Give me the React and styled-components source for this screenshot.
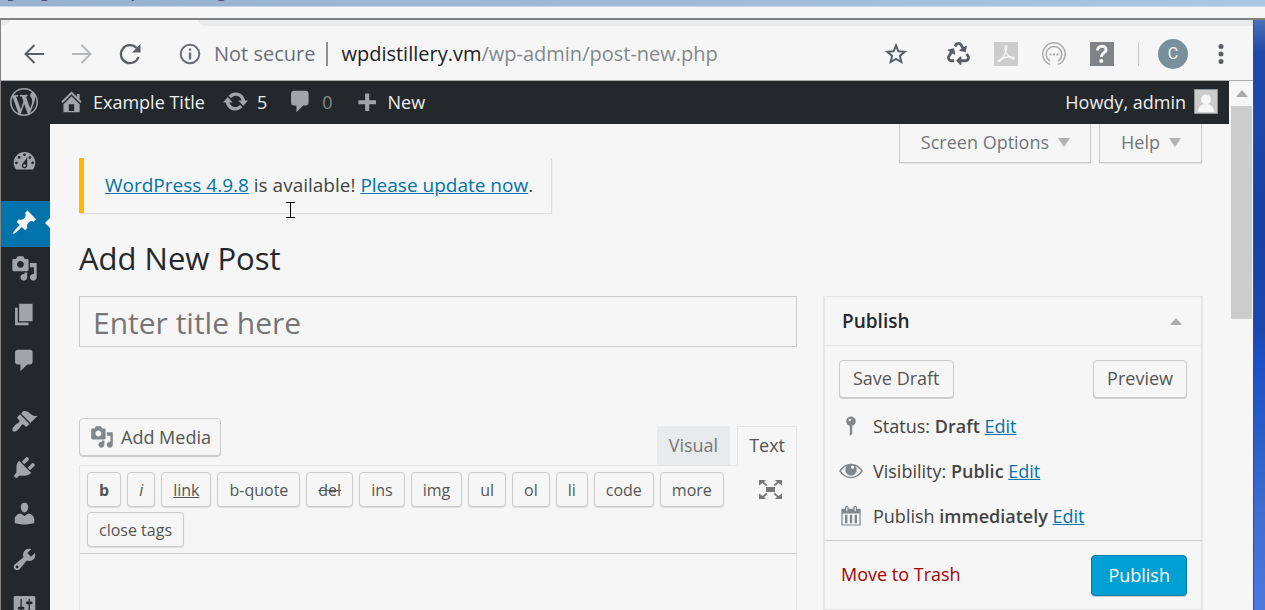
import React, { useState } from 'react';
import styled, { createGlobalStyle, css } from 'styled-components';
import { FaRecycle } from 'react-icons/fa';

const Global = createGlobalStyle`
  *, *::before, *::after { box-sizing: border-box; }
  html, body { margin: 0; height: 100%; overflow: hidden; }
  #root { height: 100%; }
  body { font-family: "Open Sans", "Noto Sans", sans-serif; font-size: 18px; line-height: 26px; color: #444; background: #f6f6f6; }
  button, input { font: inherit; color: inherit; margin: 0; }
  button { cursor: pointer; }
  svg { display: block; flex: none; }
  a { color: #0073aa; }
`;

const icons = {
  wordpress: 'M20 10c0-5.51-4.49-10-10-10C4.48 0 0 4.49 0 10c0 5.52 4.48 10 10 10 5.51 0 10-4.48 10-10zM7.78 15.37L4.37 6.22c.55-.02 1.17-.08 1.17-.08.5-.06.44-1.13-.06-1.11 0 0-1.45.11-2.37.11-.18 0-.37 0-.58-.01C4.12 2.69 6.87 1.11 10 1.11c2.33 0 4.45.87 6.05 2.34-.68-.11-1.65.39-1.65 1.58 0 .74.45 1.36.9 2.1.35.61.55 1.36.55 2.46 0 1.49-1.4 5-1.4 5l-3.03-8.37c.54-.02.82-.17.82-.17.5-.05.44-1.25-.06-1.22 0 0-1.44.12-2.38.12-.87 0-2.33-.12-2.33-.12-.5-.03-.56 1.2-.06 1.22l.92.08 1.26 3.41zM17.41 10c.24-.64.74-1.87.43-4.25.7 1.29 1.05 2.71 1.05 4.25 0 3.29-1.73 6.24-4.4 7.78.97-2.59 1.94-5.2 2.92-7.78zM6.1 18.09C3.12 16.65 1.11 13.53 1.11 10c0-1.3.23-2.48.72-3.59C3.25 10.3 4.67 14.2 6.1 18.09zm4.03-6.63l2.58 6.98c-.86.29-1.76.45-2.71.45-.79 0-1.57-.11-2.29-.33.81-2.38 1.62-4.74 2.42-7.1z',
  home: 'M16 8.5l1.53 1.53-1.06 1.06L10 4.6l-6.47 6.49-1.06-1.06L10 2.5l4 4v-2h2v4zm-6-2.46l6 5.99V18H4v-5.97zM12 17v-5H8v5h4z',
  update: 'M10.2 3.28c3.53 0 6.43 2.61 6.92 6h2.08l-3.5 4-3.5-4h2.32c-.45-1.97-2.21-3.45-4.32-3.45-1.45 0-2.73.71-3.54 1.78L4.95 5.66C6.23 4.2 8.11 3.28 10.2 3.28zm-.4 13.44c-3.52 0-6.43-2.61-6.92-6H.8l3.5-4c1.17 1.33 2.33 2.67 3.5 4H5.48c.45 1.97 2.21 3.45 4.32 3.45 1.45 0 2.73-.71 3.54-1.78l1.71 1.95c-1.28 1.46-3.15 2.38-5.25 2.38z',
  comments: 'M5 2h9c1.1 0 2 .9 2 2v7c0 1.1-.9 2-2 2h-2l-5 5v-5H5c-1.1 0-2-.9-2-2V4c0-1.1.9-2 2-2z',
  plus: 'M17 9v3h-5v5H9v-5H4V9h5V4h3v5h5z',
  dashboard: 'M3.76 16h12.48c1.1-1.37 1.76-3.11 1.76-5 0-4.42-3.58-8-8-8s-8 3.58-8 8c0 1.89.66 3.63 1.76 5zM10 4c.55 0 1 .45 1 1s-.45 1-1 1-1-.45-1-1 .45-1 1-1zM6 6c.55 0 1 .45 1 1s-.45 1-1 1-1-.45-1-1 .45-1 1-1zm8 0c.55 0 1 .45 1 1s-.45 1-1 1-1-.45-1-1 .45-1 1-1zm-5.37 5.55L12 7v6c0 1.1-.9 2-2 2s-2-.9-2-2c0-.57.24-1.08.63-1.45zM4 10c.55 0 1 .45 1 1s-.45 1-1 1-1-.45-1-1 .45-1 1-1zm12 0c.55 0 1 .45 1 1s-.45 1-1 1-1-.45-1-1 .45-1 1-1zm-5 3c0-.55-.45-1-1-1s-1 .45-1 1 .45 1 1 1 1-.45 1-1z',
  post: 'M10.44 3.02l1.82-1.82 6.36 6.35-1.83 1.82c-1.05-.68-2.48-.57-3.41.36l-.75.75c-.92.93-1.04 2.35-.35 3.41l-1.83 1.82-2.41-2.41-2.8 2.79c-.42.42-3.38 2.71-3.8 2.29s1.86-3.39 2.28-3.81l2.79-2.79L4.1 9.36l1.83-1.82c1.05.69 2.48.57 3.4-.36l.75-.75c.93-.92 1.05-2.35.36-3.41z',
  media: 'M13 11V4c0-.55-.45-1-1-1h-1.67L9 1H5L3.67 3H2c-.55 0-1 .45-1 1v7c0 .55.45 1 1 1h10c.55 0 1-.45 1-1zM7 4.5c1.38 0 2.5 1.12 2.5 2.5S8.38 9.5 7 9.5 4.5 8.38 4.5 7 5.62 4.5 7 4.5zM14 6h5v10.5c0 1.38-1.12 2.5-2.5 2.5S14 17.88 14 16.5s1.12-2.5 2.5-2.5c.17 0 .34.02.5.05V9h-3V6zm-4 8.05V13h2v3.5c0 1.38-1.12 2.5-2.5 2.5S7 17.88 7 16.5 8.12 14 9.5 14c.17 0 .34.02.5.05z',
  page: 'M6 15V2h10v13H6zm-1 1h8v2H3V5h2v11z',
  appearance: 'M14.48 11.06L7.41 3.99l1.5-1.5c.5-.56 2.3-.47 3.51.32 1.21.8 1.43 1.28 2.91 2.1 1.18.64 2.45 1.26 4.45.85zm-.71.71L6.7 4.7 4.93 6.47c-.39.39-.39 1.02 0 1.41l1.06 1.06c.39.39.39 1.03 0 1.42-.6.6-1.43 1.11-2.21 1.69-.35.26-.7.53-1.01.84C1.43 14.23.4 16.08 1.4 17.07c.99 1 2.84-.03 4.18-1.36.31-.31.58-.66.85-1.02.57-.78 1.08-1.61 1.69-2.21.39-.39 1.02-.39 1.41 0l1.06 1.06c.39.39 1.02.39 1.41 0z',
  plugins: 'M13.11 4.36L9.87 7.6 8 5.73l3.24-3.24c.35-.34 1.05-.2 1.56.32.52.51.66 1.21.31 1.55zm-8 1.77l.91-1.12 9.01 9.01-1.19.84c-.71.71-2.63 1.16-3.82 1.16H6.14L4.9 17.26c-.59.59-1.54.59-2.12 0-.59-.58-.59-1.53 0-2.12l1.24-1.24v-3.88c0-1.13.4-3.19 1.09-3.89zm7.26 3.97l3.24-3.24c.34-.35 1.04-.21 1.55.31.52.51.66 1.21.31 1.55l-3.24 3.25z',
  users: 'M10 9.25c-2.27 0-2.73-3.44-2.73-3.44C7 4.02 7.82 2 9.97 2c2.16 0 2.98 2.02 2.71 3.81 0 0-.41 3.44-2.68 3.44zm0 2.57L12.72 10c2.39 0 4.52 2.33 4.52 4.53v2.49s-3.65 1.13-7.24 1.13c-3.65 0-7.24-1.13-7.24-1.13v-2.49c0-2.25 1.94-4.48 4.47-4.48z',
  tools: 'M16.68 9.77c-1.34 1.34-3.3 1.67-4.95.99l-5.41 6.52c-.99.99-2.59.99-3.58 0s-.99-2.59 0-3.57l6.52-5.42c-.68-1.65-.35-3.61.99-4.95 1.28-1.28 3.12-1.62 4.72-1.06l-2.89 2.89 2.82 2.82 2.86-2.87c.53 1.58.18 3.39-1.08 4.65zM3.81 16.21c.4.39 1.04.39 1.43 0 .4-.4.4-1.04 0-1.43-.39-.4-1.03-.4-1.43 0-.39.39-.39 1.03 0 1.43z',
  settings: 'M18 16V4c0-.55-.45-1-1-1H3c-.55 0-1 .45-1 1v12c0 .55.45 1 1 1h14c.55 0 1-.45 1-1zM8 11h1c.55 0 1 .45 1 1s-.45 1-1 1H8v1.5c0 .28-.22.5-.5.5s-.5-.22-.5-.5V13H6c-.55 0-1-.45-1-1s.45-1 1-1h1V5.5c0-.28.22-.5.5-.5s.5.22.5.5V11zm5-2h-1c-.55 0-1-.45-1-1s.45-1 1-1h1V5.5c0-.28.22-.5.5-.5s.5.22.5.5V7h1c.55 0 1 .45 1 1s-.45 1-1 1h-1v5.5c0 .28-.22.5-.5.5s-.5-.22-.5-.5V9z',
  status: 'M14 6c0 1.86-1.28 3.41-3 3.86V16c0 1-2 2-2 2V9.86c-1.72-.45-3-2-3-3.86 0-2.21 1.79-4 4-4s4 1.79 4 4zM8 5c0 .55.45 1 1 1s1-.45 1-1-.45-1-1-1-1 .45-1 1z',
  visibility: 'M0 10Q4 4 10 4T20 10Q16 16 10 16T0 10zM1.6 10Q4.8 14.8 10 14.8T18.4 10Q16.6 7 13.6 5.8A4.8 4.8 0 1 1 6.4 5.8Q3.4 7 1.6 10zM10 6.8a1.3 1.3 0 1 0 2.6 0a1.3 1.3 0 1 0-2.6 0z',
  calendar: 'M15 4h3v14H2V4h3V3c0-.83.67-1.5 1.5-1.5S8 2.17 8 3v1h4V3c0-.83.67-1.5 1.5-1.5S15 2.17 15 3v1zM6 3v2.5c0 .28.22.5.5.5s.5-.22.5-.5V3c0-.28-.22-.5-.5-.5S6 2.72 6 3zm7 0v2.5c0 .28.22.5.5.5s.5-.22.5-.5V3c0-.28-.22-.5-.5-.5s-.5.22-.5.5zm4 14V8H3v9h14zM7 16V9H5v7h2zm4 0V9H9v7h2zm4 0V9h-2v7h2z',
};

const Icon = ({ name, size = 27 }) => (
  <svg width={size} height={size} viewBox="0 0 20 20" fill="currentColor" fillRule="evenodd" aria-hidden="true">
    <path d={icons[name]} />
  </svg>
);

const Screen = styled.div`
  height: 100%;
  display: flex;
  flex-direction: column;
`;
const BackWindow = styled.div`
  flex: none;
  height: 7px;
  border-bottom: 1px solid #c8d6e6;
  background: linear-gradient(90deg, #98b2d2, #a0b9d7 50%, #a9c8e5);
`;
const BackGap = styled.div`
  flex: none;
  height: 11px;
`;
const Desktop = styled.div`
  flex: 1;
  min-height: 0;
  display: flex;
  border-top: 2px solid #808080;
`;
const Wallpaper = styled.div`
  flex: none;
  width: 12px;
  border-left: 1px solid #2c4f98;
  background: linear-gradient(180deg, #4a72b8 0, #1e4aa8 32px, #1742a2 200px, #1a48ac 310px, #1c50c8 340px, #2a5cc8 410px, #4070d0 500px, #4a78e0 590px);
`;
const BrowserWindow = styled.div`
  flex: 1;
  min-width: 0;
  display: flex;
  flex-direction: column;
  border-left: 1px solid #848484;
`;
const TabStrip = styled.div`
  flex: none;
  height: 6px;
  display: flex;
  justify-content: space-between;
`;
const TabEdge = styled.div`
  width: 9px;
  background: #e8e9eb;
  border-bottom-right-radius: 9px 6px;
`;
const TabRest = styled.div`
  flex: 1;
  margin-left: 188px;
  background: #e8e9eb;
  border-bottom-left-radius: 9px 6px;
`;
const Toolbar = styled.div`
  flex: none;
  height: 55px;
  display: flex;
  align-items: center;
  padding: 1px 29px 0 21px;
  border-bottom: 1px solid #a8adab;
  color: #5a5f66;
`;
const NavButtons = styled.div`
  display: flex;
  gap: 24px;
  margin-right: 37px;
`;
const BareButton = styled.button`
  display: flex;
  align-items: center;
  justify-content: center;
  padding: 0;
  border: 0;
  background: none;
  color: ${(p) => p.$color || 'inherit'};
`;
const Address = styled.div`
  flex: 1;
  min-width: 0;
  display: flex;
  align-items: center;
  font-size: 20px;
  color: #6b7078;
`;
const Secure = styled.span`
  padding: 0 11px 0 13px;
`;
const Divider = styled.span`
  width: ${(p) => p.$width}px;
  height: 24px;
  background: ${(p) => p.$color};
`;
const Url = styled.span`
  margin-left: 13px;
  color: #84898c;
  b { font-weight: 400; color: #202124; }
`;
const Extensions = styled.div`
  display: flex;
  align-items: center;
  gap: 24px;
  margin: 0 24px 0 39px;
`;
const Profile = styled.button`
  width: 30px;
  height: 30px;
  margin: 0 30px 0 19px;
  padding: 0;
  border: 0;
  border-radius: 50%;
  background: #78909c;
  color: #f6f6f6;
  font: 16px/30px Roboto, sans-serif;
`;
const Viewport = styled.div`
  flex: 1;
  min-height: 0;
  display: flex;
`;
const Admin = styled.div`
  flex: 1;
  min-width: 0;
  display: flex;
  flex-direction: column;
`;
const ScrollTrack = styled.div`
  flex: none;
  width: 24px;
  display: flex;
  flex-direction: column;
  align-items: center;
  gap: 9px;
  padding: 9px 1px 0 2px;
`;
const ScrollThumb = styled.div`
  width: 100%;
  height: 213px;
  background: #ccc;
`;
const Triangle = styled.span`
  display: block;
  width: 0;
  height: 0;
  border: solid transparent;
  border-width: 0 6px;
  ${(p) => (p.$up
    ? css`border-bottom: 7px solid #aaacae;`
    : css`border-top: 9px solid #b0b3b5;`)}
`;
const AdminBar = styled.header`
  flex: none;
  height: 43px;
  display: flex;
  align-items: center;
  padding: 0 11px 2px 9px;
  background: #23282d;
  color: #eee;
`;
const BarLink = styled.a`
  display: flex;
  align-items: center;
  gap: 8px;
  margin-right: ${(p) => p.$after || 0}px;
  color: inherit;
  text-decoration: none;
  svg { color: #a0a5aa; }
  span { color: ${(p) => (p.$dim ? '#82878c' : 'inherit')}; }
`;
const Account = styled(BarLink)`
  margin-left: auto;
`;
const Body = styled.div`
  flex: 1;
  min-height: 0;
  display: flex;
`;
const SideMenu = styled.nav`
  flex: none;
  width: 49px;
  padding-top: 16px;
  overflow: hidden;
  background: #23282d;
`;
const SideLink = styled.a`
  position: relative;
  display: flex;
  align-items: center;
  justify-content: center;
  height: 46px;
  padding: 0 3px 3px 0;
  margin-top: ${(p) => (p.$gap ? 15 : 0)}px;
  color: #a0a5aa;
  ${(p) => p.$current && css`
    color: #f6f6f6;
    background: #0073aa;
    &::after {
      content: '';
      position: absolute;
      right: 0;
      border: 5px solid transparent;
      border-left-width: 0;
      border-right-color: #f6f6f6;
    }
  `}
`;
const Content = styled.main`
  flex: 1;
  min-width: 0;
  overflow: hidden;
  padding: 0 26px 0 29px;
`;
const MetaLinks = styled.div`
  display: flex;
  justify-content: flex-end;
  gap: 8px;
  height: 34px;
  padding-right: 1px;
`;
const MetaButton = styled.button`
  flex: none;
  height: 39px;
  display: flex;
  align-items: center;
  gap: 9px;
  padding: 0 20px 2px 21px;
  border: 1px solid #ccc;
  border-top: 0;
  background: #f6f6f6;
  color: #72777c;
  box-shadow: 0 1px 1px #e5e5e5;
`;
const Notice = styled.p`
  width: fit-content;
  margin: 0;
  padding: 14px 18px 15px 21px;
  border-left: 5px solid #ffb900;
  box-shadow: 1px 1px 1px #ddd;
  font-size: 19px;
`;
const Title = styled.h1`
  margin: 21px 0 14px;
  font-size: 31px;
  line-height: 48px;
  font-weight: 400;
  color: #23282d;
`;
const Columns = styled.div`
  display: flex;
  align-items: flex-start;
  gap: 26px;
`;
const Editor = styled.section`
  flex: 1;
  min-width: 0;
`;
const TitleInput = styled.input`
  display: block;
  width: 100%;
  height: 51px;
  padding: 2px 13px 0;
  border: 1px solid #ccc;
  border-radius: 0;
  outline: 0;
  background: #f6f6f6;
  font-size: 30px;
  &::placeholder { color: #757575; opacity: 1; }
`;
const EditorTools = styled.div`
  display: flex;
  justify-content: space-between;
  align-items: flex-start;
  margin-top: 71px;
`;
const Button = styled.button`
  display: flex;
  align-items: center;
  gap: 7px;
  height: ${(p) => (p.$primary ? 41 : 38)}px;
  padding: 0 ${(p) => (p.$primary ? 16 : 13)}px 2px;
  border: 1px solid #ccc;
  border-radius: 4px;
  background: #f6f6f6;
  box-shadow: 0 1px 0 #ccc;
  color: #555;
  svg { color: #82878c; }
  ${(p) => p.$primary && css`
    border-color: #0079b0;
    background: #00a0d2;
    color: #fff;
  `}
`;
const MediaButton = styled(Button)`
  padding: 0 9px 1px 10px;
`;
const Tabs = styled.div`
  display: flex;
  gap: 7px;
  padding-top: 8px;
  margin-bottom: -1px;
`;
const Tab = styled.button`
  height: 40px;
  padding: 0 11px 2px;
  border: 1px solid ${(p) => (p.$active ? '#e5e5e5' : '#e8eaeb')};
  border-bottom-color: ${(p) => (p.$active ? '#f6f6f6' : '#e5e5e5')};
  background: ${(p) => (p.$active ? '#f6f6f6' : '#e8eaeb')};
  color: ${(p) => (p.$active ? '#555' : '#777')};
`;
const EditorBox = styled.div`
  height: 300px;
  border: 1px solid #e5e5e5;
`;
const QuickTags = styled.div`
  display: flex;
  justify-content: space-between;
  align-items: flex-start;
  padding: 6px 12px 6px 7px;
  border-bottom: 1px solid #ccc;
`;
const TagList = styled.div`
  display: flex;
  flex-wrap: wrap;
  gap: 5px 6px;
  max-width: 650px;
`;
const TagButton = styled.button`
  height: 35px;
  padding: 0 11px;
  border: 1px solid #ccc;
  border-radius: 4px;
  background: #f6f6f6;
  box-shadow: 0 1px 1px #ddd;
  color: #555;
  font-size: 16px;
  font-weight: ${(p) => (p.$kind === 'b' ? 700 : 400)};
  font-style: ${(p) => (p.$kind === 'i' ? 'italic' : 'normal')};
  text-decoration: ${(p) => ({ link: 'underline', del: 'line-through' }[p.$kind] || 'none')};
`;
const FullscreenButton = styled(BareButton)`
  height: 35px;
  color: #777;
`;
const PublishBox = styled.section`
  flex: none;
  width: 380px;
  border: 1px solid #e5e5e5;
  border-width: 1px 2px;
`;
const BoxHeader = styled.div`
  display: flex;
  align-items: center;
  justify-content: space-between;
  height: 49px;
  padding: 0 19px 0 17px;
  border-bottom: 1px solid #e5e5e5;
  h2 { margin: 0; font-size: 19px; font-weight: 600; color: #23282d; }
`;
const BoxRow = styled.div`
  display: flex;
  align-items: center;
  justify-content: space-between;
  padding: ${(p) => (p.$footer ? '14px 14px 13px 16px' : '14px 14px 5px')};
  border-top: ${(p) => (p.$footer ? '1px solid #ccc' : '0')};
`;
const MiscList = styled.div`
  padding-bottom: 2px;
`;
const MiscRow = styled.div`
  display: flex;
  align-items: center;
  gap: 10px;
  height: 45px;
  padding: 0 14px;
  color: #444;
  svg { color: #82878c; }
  b { font-weight: 600; }
`;
const TrashLink = styled.a`
  padding-bottom: 4px;
  color: #a00;
  text-decoration: none;
`;
const Pointer = styled.svg`
  position: absolute;
  left: 285px;
  top: 202px;
`;

const menu = [
  ['dashboard', 'Dashboard'], ['post', 'Posts', true, true], ['media', 'Media'], ['page', 'Pages'],
  ['comments', 'Comments'], ['appearance', 'Appearance', true], ['plugins', 'Plugins'],
  ['users', 'Users'], ['tools', 'Tools'], ['settings', 'Settings'],
];
const quickTags = ['b', 'i', 'link', 'b-quote', 'del', 'ins', 'img', 'ul', 'ol', 'li', 'code', 'more', 'close tags'];

const BrowserToolbar = () => (
  <Toolbar>
    <NavButtons>
      <BareButton aria-label="Back">
        <svg width="24" height="24" viewBox="0 0 24 24" fill="none" stroke="currentColor" strokeWidth="2"><path d="M22 12H4M12.500 3L3.500 12L12.500 21" /></svg>
      </BareButton>
      <BareButton aria-label="Forward" $color="#b4b8bc">
        <svg width="24" height="24" viewBox="0 0 24 24" fill="none" stroke="currentColor" strokeWidth="2"><path d="M2 12H20M11.500 3L20.500 12L11.500 21" /></svg>
      </BareButton>
      <BareButton aria-label="Reload">
        <svg width="24" height="24" viewBox="0 0 24 24" fill="none" stroke="currentColor" strokeWidth="2.300"><path d="M20.500 15A9 9 0 1 1 18.500 6" /><path d="M22.500 2v8.500H14z" fill="currentColor" stroke="none" /></svg>
      </BareButton>
    </NavButtons>
    <Address>
      <svg width="22" height="22" viewBox="0 0 22 22" fill="none" stroke="currentColor" strokeWidth="2"><circle cx="11" cy="11" r="9.300" /><path d="M11 9.500v7M11 5.500v2.300" strokeWidth="2.400" /></svg>
      <Secure>Not secure</Secure>
      <Divider $width={2} $color="#8e9296" />
      <Url><b>wpdistillery.vm</b>/wp-admin/post-new.php</Url>
    </Address>
    <BareButton aria-label="Bookmark">
      <svg width="24" height="24" viewBox="0 0 24 24" fill="none" stroke="currentColor" strokeWidth="2"><path d="M12 3.500l2.400 5.800 6.300.500-4.800 4.100 1.500 6.100L12 16.800l-5.400 3.200 1.500-6.100-4.800-4.100 6.300-.5z" /></svg>
    </BareButton>
    <Extensions>
      <BareButton aria-label="Recycle"><FaRecycle size={23} /></BareButton>
      <BareButton aria-label="PDF">
        <svg width="24" height="24" viewBox="0 0 24 24" fill="none"><path fill="#ccc" d="M0 0h24v24H0z" /><path stroke="#f6f6f6" strokeWidth="1.300" d="M11.500 4c2.500-.5 1 4-.5 7.500S7 19 5 19.500s-.5-2.500 6-4 9.500-.5 9 1-5-.5-7.500-5S11 5 11.500 4z" /></svg>
      </BareButton>
      <BareButton aria-label="Assistant" $color="#aaa">
        <svg width="24" height="24" viewBox="0 0 24 24" fill="none" stroke="currentColor" strokeWidth="1.500"><path d="M8 22.500A11.200 11.200 0 1 1 16 22.500M8 19A7.800 7.800 0 1 1 16 19" /><path d="M7.500 12.500h2m1.500 0h2m1.500 0h2" strokeWidth="2" /></svg>
      </BareButton>
      <BareButton aria-label="Help extension">
        <svg width="24" height="24" viewBox="0 0 24 24" fill="none"><path fill="#808388" d="M0 0h24v24H0z" /><path stroke="#f6f6f6" strokeWidth="3" d="M7.500 8.500C7.500 3 16.500 3 16 8c-.3 3-4.700 3-4.700 7" /><circle cx="11.300" cy="19" r="2.100" fill="#f6f6f6" /></svg>
      </BareButton>
    </Extensions>
    <Divider $width={1} $color="#c8c8c8" />
    <Profile aria-label="Profile C">C</Profile>
    <BareButton aria-label="Browser menu">
      <svg width="6" height="22" viewBox="0 0 6 22" fill="currentColor"><circle cx="3" cy="3.500" r="2.500" /><circle cx="3" cy="11" r="2.500" /><circle cx="3" cy="18.500" r="2.500" /></svg>
    </BareButton>
  </Toolbar>
);

const PublishPanel = () => (
  <PublishBox>
    <BoxHeader><h2>Publish</h2><BareButton aria-label="Toggle panel"><Triangle $up /></BareButton></BoxHeader>
    <BoxRow><Button>Save Draft</Button><Button>Preview</Button></BoxRow>
    <MiscList>
      <MiscRow><Icon name="status" size={24} /><span>Status: <b>Draft</b> <a href="#status">Edit</a></span></MiscRow>
      <MiscRow><Icon name="visibility" size={24} /><span>Visibility: <b>Public</b> <a href="#visibility">Edit</a></span></MiscRow>
      <MiscRow><Icon name="calendar" size={24} /><span>Publish <b>immediately</b> <a href="#date">Edit</a></span></MiscRow>
    </MiscList>
    <BoxRow $footer><TrashLink href="#trash">Move to Trash</TrashLink><Button $primary>Publish</Button></BoxRow>
  </PublishBox>
);

export default function App() {
  const [title, setTitle] = useState('');
  return (
    <Screen>
      <Global />
      <BackWindow>
        <svg width="240" height="2" viewBox="0 0 240 2" fill="#4c5068" aria-hidden="true"><path d="M8 0h6l-2 1H8zM41 0h7l-2 1h-4zM131 0h3v1h-2zM218 0h7l-2 1h-4z" /></svg>
      </BackWindow>
      <BackGap />
      <Desktop>
        <BrowserWindow>
          <TabStrip><TabEdge /><TabRest /></TabStrip>
          <BrowserToolbar />
          <Viewport>
            <Admin>
              <AdminBar>
                <BarLink href="#about" $after={20} aria-label="About WordPress"><Icon name="wordpress" size={28} /></BarLink>
                <BarLink href="#site" $after={17}><Icon name="home" /><span>Example Title</span></BarLink>
                <BarLink href="#updates" $after={20}><Icon name="update" /><span>5</span></BarLink>
                <BarLink href="#comments" $after={20} $dim><Icon name="comments" /><span>0</span></BarLink>
                <BarLink href="#new"><Icon name="plus" /><span>New</span></BarLink>
                <Account href="#profile"><span>Howdy, admin</span>
                  <svg width="24" height="25" viewBox="0 0 24 25"><path fill="#8f9296" d="M0 0h24v25H0z" /><path fill="#ccc" d="M1 1h22v23H1z" /><circle cx="12" cy="10.500" r="5" fill="#f6f6f6" /><path fill="#f6f6f6" d="M4 23c0-5 3-8 8-8s8 3 8 8z" /></svg>
                </Account>
              </AdminBar>
              <Body>
                <SideMenu>
                  {menu.map(([name, label, gap, current]) => (
                    <SideLink key={name} href={`#${name}`} aria-label={label} $gap={gap} $current={current}><Icon name={name} /></SideLink>
                  ))}
                </SideMenu>
                <Content>
                  <MetaLinks>
                    <MetaButton>Screen Options <Triangle /></MetaButton>
                    <MetaButton>Help <Triangle /></MetaButton>
                  </MetaLinks>
                  <Notice><a href="#version">WordPress 4.9.8</a> is available! <a href="#update">Please update now</a>.</Notice>
                  <Title>Add New Post</Title>
                  <Columns>
                    <Editor>
                      <TitleInput aria-label="Title" placeholder="Enter title here" value={title} onChange={(e) => setTitle(e.target.value)} />
                      <EditorTools>
                        <MediaButton><Icon name="media" size={24} />Add Media</MediaButton>
                        <Tabs><Tab>Visual</Tab><Tab $active>Text</Tab></Tabs>
                      </EditorTools>
                      <EditorBox>
                        <QuickTags>
                          <TagList>{quickTags.map((tag) => <TagButton key={tag} $kind={tag}>{tag}</TagButton>)}</TagList>
                          <FullscreenButton aria-label="Distraction-free writing">
                            <svg width="27" height="24" viewBox="0 0 27 24" fill="currentColor"><path d="M2 2h7L7 4l3.500 3-1.300 1.300L5.500 5 2 7.500zM25 2v5.500L21.500 5l-3.700 3.300L16.500 7 20 4l-2-2zM2 21v-5.500L5.500 18l3.700-3.300 1.300 1.300L7 19l2 2zM25 21h-7l2-2-3.500-3 1.300-1.300 3.700 3.300 3.500-2.500zM9 9h9v5H9z" /></svg>
                          </FullscreenButton>
                        </QuickTags>
                      </EditorBox>
                    </Editor>
                    <PublishPanel />
                  </Columns>
                </Content>
              </Body>
            </Admin>
            <ScrollTrack><Triangle $up /><ScrollThumb /></ScrollTrack>
          </Viewport>
        </BrowserWindow>
        <Wallpaper />
      </Desktop>
      <Pointer width="11" height="17" viewBox="0 0 11 17" fill="none" stroke="#000" shapeRendering="crispEdges"><path d="M1 .5h9M1 15.500h9M5.500 1v14" /></Pointer>
    </Screen>
  );
}
